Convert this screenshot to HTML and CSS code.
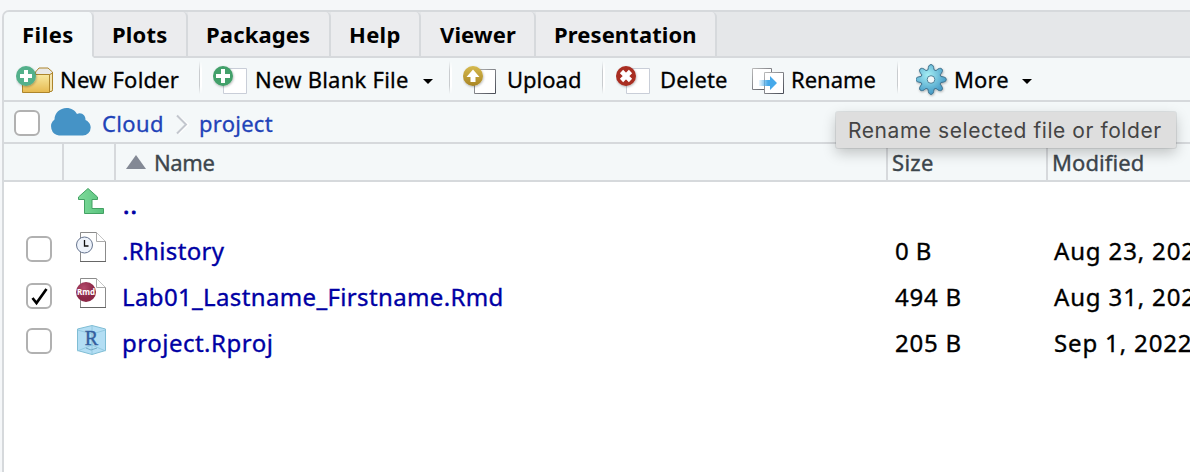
FILE: index.html
```html
<!DOCTYPE html>
<html lang="en">
<head>
<meta charset="utf-8">
<title>Files</title>
<link rel="stylesheet" href="styles.css">
</head>
<body>
<svg class="defs" width="0" height="0">
  <defs>
    <linearGradient id="folder" x2="0" y2="1"><stop stop-color="#f8e9a0"/><stop offset="1" stop-color="#e6b94f"/></linearGradient>
    <linearGradient id="gold" x2="0" y2="1"><stop stop-color="#d6ba4e"/><stop offset="1" stop-color="#a98524"/></linearGradient>
    <linearGradient id="edge" x2="1" y2="1"><stop stop-color="#bbb"/><stop offset="1" stop-color="#474b55"/></linearGradient>
    <linearGradient id="arrow"><stop stop-color="#46a9ea" stop-opacity=".1"/><stop offset=".5" stop-color="#46a9ea"/></linearGradient>
    <radialGradient id="gear" cx=".4" cy=".35" r=".6"><stop stop-color="#a4eef4"/><stop offset="1" stop-color="#4b9fc9"/></radialGradient>
    <linearGradient id="up" x2="1" y2="0"><stop stop-color="#7fdb9b"/><stop offset="1" stop-color="#58c27d"/></linearGradient>
    <radialGradient id="rmd" cx=".4" cy=".3"><stop stop-color="#b34a6b"/><stop offset="1" stop-color="#8b2746"/></radialGradient>
    <filter id="soft" x="-30%" y="-30%" width="160%" height="170%"><feDropShadow dx=".5" dy="1" stdDeviation=".8" flood-opacity=".3"/></filter>
  </defs>
</svg>
<main class="pane">
  <nav class="tabs">
    <span class="tab active files">Files</span>
    <span class="tab plots">Plots</span>
    <span class="tab packages">Packages</span>
    <span class="tab help">Help</span>
    <span class="tab viewer">Viewer</span>
    <span class="tab presentation">Presentation</span>
  </nav>

  <div class="toolbar">
    <span class="tool">
      <svg class="icon w44" viewBox="16 58 44 42">
        <path d="M35.500 91V72l3.500-4h9l4.500 4v17q0 2.500-3 2.500z" fill="#e9e9e7" stroke="#ad852b"/>
        <path d="M49 75v16.500h2q1.500 0 1.500-2V73z" fill="#f4e5b0" stroke="#ad852b"/>
        <path d="M22.500 74.500h27v18h-27z" fill="url(#folder)" stroke="#ad852b"/>
        <circle cx="26" cy="76" r="10" fill="#53b08b" filter="url(#soft)"/>
        <path d="M26 70v12M20 76h12" stroke="#fff" stroke-width="4"/>
      </svg>New Folder</span>
    <i class="sep"></i>
    <span class="tool blank">
      <svg class="icon w42" viewBox="213 58 42 42">
        <path d="M223.500 68.500h23v25h-23z" fill="#fff" stroke="#c9ced8"/>
        <circle cx="223" cy="76" r="10" fill="#43a06a" filter="url(#soft)"/>
        <path d="M223 69v14M216 76h14" stroke="#fff" stroke-width="4"/>
      </svg>New Blank File
      <svg class="caret" viewBox="0 0 10 5"><path d="M0 0h10L5 5z"/></svg></span>
    <i class="sep"></i>
    <span class="tool upload">
      <svg class="icon w44" viewBox="463 58 44 42">
        <path d="M474.500 69.500h21v24h-21z" fill="#fff" stroke="url(#edge)"/>
        <circle cx="473" cy="76" r="10" fill="url(#gold)" filter="url(#soft)"/>
        <path d="M473 69.500l6.500 7.500h-4v5h-5v-5h-4z" fill="#fff"/>
      </svg>Upload</span>
    <i class="sep"></i>
    <span class="tool delete">
      <svg class="icon w44" viewBox="616 58 44 42">
        <path d="M626.500 68.500h23v25h-23z" fill="#fff" stroke="#c9ced8"/>
        <circle cx="626" cy="76" r="10" fill="#a92e22" filter="url(#soft)"/>
        <path d="M621.500 71.500l9 9m0-9l-9 9" stroke="#fff" stroke-width="4.600"/>
      </svg>Delete</span>
    <span class="tool rename">
      <svg class="icon w39" viewBox="752 58 39 42">
        <path d="M752.500 68.500h19v21h-19z" fill="#fff" stroke="url(#edge)"/>
        <path d="M764.500 72.500h19v21h-19z" fill="#fff" stroke="url(#edge)"/>
        <path d="M759 80h11v-4l7 7-7 7v-4h-11z" fill="url(#arrow)"/>
      </svg>Rename</span>
    <i class="sep"></i>
    <span class="tool more">
      <svg class="icon w38" viewBox="916 58 38 42">
        <path d="M928 69.800C928.300 66.500 929 64.600 931 64.600S933.700 66.500 934 69.800L936 70.600C938.500 68.300 940.600 67.600 941.900 69S942.300 72.400 940.100 74.900L940.900 76.500C944.300 76.800 946.300 77.500 946.300 79.500S944.300 82.200 940.900 82.500L940.100 84.100C942.300 86.600 943.200 88.600 941.900 90S938.500 90.700 936 88.400L934 89.200C933.700 92.500 933 94.400 931 94.400S928.300 92.500 928 89.200L926 88.400C923.500 90.700 921.400 91.400 920.100 90S919.700 86.600 921.900 84.100L921.100 82.500C917.700 82.200 915.900 81.500 915.900 79.500S917.700 76.800 921.100 76.500L921.900 74.900C919.700 72.400 918.800 70.400 920.100 69S923.500 68.300 926 70.600Z" fill="url(#gear)" stroke="#3f718c" filter="url(#soft)"/>
        <circle cx="931" cy="79.500" r="3.800" fill="#f4f8f9" stroke="#50849b"/>
      </svg>More
      <svg class="caret" viewBox="0 0 10 5"><path d="M0 0h10L5 5z"/></svg></span>
  </div>

  <div class="path">
    <span class="check"></span>
    <svg class="cloud" viewBox="50 107 42 30"><path d="M60 135.500A9 9 0 0 1 55.500 119.500C55.500 113 61 108 67.500 108C72.500 108 76 110.500 78 114C82 111.500 87 115 86.500 120C89 121 91.700 124 91.700 127.500A8 8 0 0 1 83.500 135.500Z" fill="#4593c6"/></svg>
    <a class="crumb-cloud">Cloud</a>
    <svg class="chevron" viewBox="176 114 13 21"><path d="M178.500 116.500l9.500 8-9.500 9" fill="none" stroke="#fff" stroke-width="2"/><path d="M177 115.500l9 9-9 9" fill="none" stroke="#c3c7ce" stroke-width="2"/></svg>
    <a class="crumb-project">project</a>
  </div>

  <div class="row head">
    <span class="cell"></span>
    <span class="cell"></span>
    <span class="cell name"><svg class="sort" viewBox="0 0 20 14"><path d="M10 0l10 14H0z" fill="#838995"/></svg><b class="t-name">Name</b></span>
    <span class="cell size"><b class="t-size">Size</b></span>
    <span class="cell mod"><b class="t-mod">Modified</b></span>
  </div>

  <div class="row">
    <span></span>
    <span class="glyph"><svg class="file" viewBox="76 185 32 32"><path d="M88 188.500l9.500 8.500v2.500H92V208.500h11.500v5h-19v-14h-6v-2.500z" fill="url(#up)" stroke="#43a163"/></svg></span>
    <a class="fname dots">..</a>
  </div>
  <div class="row">
    <span class="pick"><span class="check"></span></span>
    <span class="glyph"><svg class="file" viewBox="76 231 32 32">
      <path d="M80.500 232.500h16l9 9v20h-25z" fill="#fff" stroke="#8b8b8b"/><path d="M96.500 232.500v9h9" fill="#fff" stroke="#aaa"/><path d="M80 261.500h26" stroke="#666"/>
      <circle cx="84.500" cy="245" r="8" fill="#eef3fb" stroke="#66748e"/><path d="M84.500 240v6h4" fill="none" stroke="#111" stroke-width="1.300"/></svg></span>
    <a class="fname hist">.Rhistory</a>
    <span class="val zero">0 B</span>
    <span class="date">Aug 23, 2022</span>
  </div>
  <div class="row">
    <span class="pick low"><span class="check"><svg class="tick" viewBox="0 0 22 22"><path d="M4.500 13l4 5L18.500 4" fill="none" stroke="#000" stroke-width="2.700"/></svg></span></span>
    <span class="glyph"><svg class="file" viewBox="76 277 32 32">
      <path d="M80.500 278.500h16l9 9v20h-25z" fill="#fff" stroke="#8b8b8b"/><path d="M96.500 278.500v9h9" fill="#fff" stroke="#aaa"/><path d="M80 307.500h26" stroke="#666"/>
      <circle cx="86" cy="292" r="10" fill="url(#rmd)"/><text x="86" y="295" class="rmd" text-anchor="middle" textLength="18" lengthAdjust="spacingAndGlyphs">Rmd</text></svg></span>
    <a class="fname lab">Lab01_Lastname_Firstname.Rmd</a>
    <span class="val">494 B</span>
    <span class="date">Aug 31, 2022</span>
  </div>
  <div class="row">
    <span class="pick"><span class="check"></span></span>
    <span class="glyph"><svg class="file" viewBox="76 323 32 32">
      <path d="M77.500 329L92 325.500l13.500 3.500v21.500L92 354.500 77.500 350.500z" fill="#b3def4" stroke="#7fbdd4"/>
      <path d="M77.500 330L92 334l13.500-4M92 334v21M77.500 351L92 345l13.500 6M92 326v19" fill="none" stroke="#8ac4dc" stroke-width=".8"/>
      <text x="91.500" y="345" class="rproj" text-anchor="middle">R</text><path d="M86 348l5 2 6-2" fill="none" stroke="#75aac5"/></svg></span>
    <a class="fname proj">project.Rproj</a>
    <span class="val">205 B</span>
    <span class="date">Sep 1, 2022</span>
  </div>
</main>
<div class="tooltip">Rename selected file or folder</div>
</body>
</html>
```

FILE: styles.css
```css
* { box-sizing: border-box; }
body {
  margin: 0;
  height: 472px;
  overflow: hidden;
  background: #f5f7f9;
  font: 22px "Noto Sans", "Open Sans", sans-serif;
  color: #000;
  white-space: nowrap;
}
svg { display: block; flex: none; }
.defs { position: absolute; }
.pane {
  margin: 10px 0 0 2px;
  height: 462px;
  background: #fff;
  border: solid #d6d9dc;
  border-width: 2px 0 0 2px;
  border-top-left-radius: 7px;
  overflow: hidden;
}

.tabs { display: flex; height: 46px; background: #e5e7e9; }
.tab {
  height: 46px;
  line-height: 44px;
  font-weight: 700;
  background: #ebecee;
  border: solid #d6d9dc;
  border-width: 0 2px 2px 0;
  border-top-right-radius: 5px;
}
.tabs::after { content: ""; flex: 1; border-bottom: 2px solid #d6d9dc; }
.active { background: #f4f8f9; border-bottom-color: #f4f8f9; }
.files { width: 90px; padding-left: 18px; letter-spacing: .5px; }
.plots { width: 94px; padding-left: 18px; letter-spacing: .2px; }
.packages { width: 143px; padding-left: 18px; letter-spacing: .15px; }
.help { width: 90px; padding-left: 18px; letter-spacing: .3px; }
.viewer { width: 115px; padding-left: 19px; letter-spacing: .1px; }
.presentation { width: 181px; padding-left: 18px; letter-spacing: .1px; }

.toolbar {
  display: grid;
  grid-template-columns: 183px 14px 236px 14px 139px 14px 136px 145px 19px auto;
  height: 44px;
  padding-left: 12px;
  background: #f4f8f9;
  border-bottom: 2px solid #d6d9dc;
}
.tool {
  display: flex;
  align-items: center;
  line-height: 42px;
  letter-spacing: .2px;
  -webkit-text-stroke: .3px;
}
.icon { height: 42px; }
.w38 { width: 38px; }
.w39 { width: 39px; }
.w42 { width: 42px; }
.w44 { width: 44px; }
.blank { letter-spacing: .24px; }
.upload { letter-spacing: 0; }
.delete { letter-spacing: .1px; }
.rename { letter-spacing: 0; }
.more { letter-spacing: .1px; }
.caret { width: 10px; height: 5px; margin: 4px 0 0 14px; }
.more .caret { margin-left: 13px; }
.sep {
  width: 3px;
  height: 33px;
  margin-top: 3px;
  background: linear-gradient(90deg, #c9cccf 0 1.500px, #fff 1.500px);
  mask-image: linear-gradient(transparent, #000 30% 75%, transparent);
}

.path {
  display: flex;
  align-items: center;
  height: 42px;
  padding-left: 10px;
  background: #f4f8f9;
  border-bottom: 2px solid #d6d9dc;
  color: #1f43b8;
  -webkit-text-stroke: .3px;
}
.check {
  display: block;
  width: 26px;
  height: 26px;
  margin-top: 2px;
  background: #fff;
  border: 2px solid #b1b1b1;
  border-radius: 6px;
}
.cloud { width: 42px; height: 30px; margin-left: 9px; }
.path a { line-height: 40px; padding-top: 2px; }
.crumb-cloud { width: 74px; margin-left: 11px; letter-spacing: .35px; }
.chevron { width: 13px; height: 21px; margin-top: 5px; }
.crumb-project { margin-left: 10px; letter-spacing: .25px; }

.row {
  display: grid;
  grid-template-columns: 60px 52px 772px 160px 140px;
  height: 46px;
  line-height: 46px;
  font-size: 24px;
  -webkit-text-stroke: .35px;
}
.head {
  height: 38px;
  line-height: 36px;
  font-size: 22px;
  background: #f4f8f9;
  border-bottom: 2px solid #d6d9dc;
  color: #3d464d;
}
.cell { border-right: 2px solid #d6d9dc; }
.cell b { font-weight: 400; }
.name { display: flex; align-items: center; padding-left: 10px; }
.sort { width: 20px; height: 14px; margin-right: 8px; }
.t-name { letter-spacing: -.4px; }
.size { padding-left: 4px; }
.t-size { letter-spacing: .3px; }
.mod { padding-left: 4px; border: 0; }
.t-mod { letter-spacing: .1px; }

.pick { padding: 6px 0 0 22px; }
.low { padding-top: 7px; }
.glyph { padding: 3px 0 0 12px; }
.file { width: 32px; height: 32px; }
.tick { width: 22px; height: 22px; }
.fname { padding-left: 6px; color: #0000a4; }
.dots { padding-left: 7px; letter-spacing: 1px; -webkit-text-stroke: .8px; }
.hist { letter-spacing: .35px; }
.lab { letter-spacing: .36px; }
.proj { letter-spacing: .5px; }
.val { padding-left: 7px; letter-spacing: .75px; }
.zero { letter-spacing: .4px; }
.date { padding-left: 6px; letter-spacing: .85px; }
.rmd { font: 700 9px "Noto Sans", sans-serif; fill: #fff; stroke: none; -webkit-text-stroke: 0; }
.rproj { font: 20px "Liberation Serif", serif; fill: #345f9e; stroke: #345f9e; stroke-width: .4px; }

.tooltip {
  position: absolute;
  left: 836px;
  top: 112px;
  width: 340px;
  height: 36px;
  padding-left: 12px;
  line-height: 38px;
  background: #dedede;
  border-radius: 2px;
  box-shadow: 0 0 0 1px rgba(0, 0, 0, .08), 0 5px 14px rgba(0, 0, 0, .22);
  color: #444;
  font-family: Inter, sans-serif;
  font-size: 21px;
  letter-spacing: .56px;
}
```
